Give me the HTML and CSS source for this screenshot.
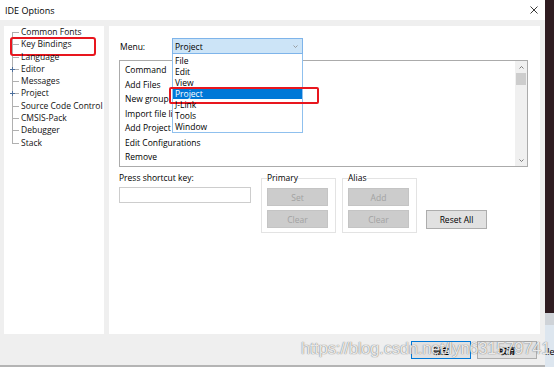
FILE: index.html
```html
<!DOCTYPE html>
<html>
<head>
<meta charset="utf-8">
<title>IDE Options</title>
<link rel="stylesheet" href="styles.css">
</head>
<body>
<div class="screen">
  <div class="dialog">
    <div class="titlebar">
      <span class="title">IDE Options</span>
      <svg class="close" width="8" height="8" viewBox="0 0 8 8"><path d="M0.5 0.5 L7.5 7.5 M7.5 0.5 L0.5 7.5" stroke="#3a3a3a" stroke-width="1" fill="none"/></svg>
    </div>
    <div class="body">
      <div class="tree">
        <div class="node">Common Fonts</div>
        <div class="node marked">Key Bindings</div>
        <div class="node">Language</div>
        <div class="node expandable">Editor</div>
        <div class="node">Messages</div>
        <div class="node expandable">Project</div>
        <div class="node">Source Code Control</div>
        <div class="node">CMSIS-Pack</div>
        <div class="node">Debugger</div>
        <div class="node">Stack</div>
      </div>
      <div class="page">
        <div class="menu-row">
          <span class="menu-label">Menu:</span>
          <div class="combo">
            <div class="combo-box">
              <span>Project</span>
              <svg class="combo-arrow" width="5" height="3" viewBox="0 0 5 3"><path d="M0.5 0.5 L2.5 2.5 L4.5 0.5" stroke="#8a8a8a" stroke-width="0.8" fill="none"/></svg>
            </div>
            <ul class="dropdown">
              <li>File</li>
              <li>Edit</li>
              <li>View</li>
              <li class="selected">Project</li>
              <li>J-Link</li>
              <li>Tools</li>
              <li>Window</li>
            </ul>
          </div>
        </div>
        <div class="listbox">
          <ul class="commands">
            <li>Command</li>
            <li>Add Files</li>
            <li>New group</li>
            <li>Import file list</li>
            <li>Add Project Configuration</li>
            <li>Edit Configurations</li>
            <li>Remove</li>
          </ul>
          <div class="scrollbar">
            <div class="sb-arrow"><svg width="5" height="3" viewBox="0 0 5 3"><path d="M0.5 2.5 L2.5 0.5 L4.5 2.5" stroke="#606060" stroke-width="0.8" fill="none"/></svg></div>
            <div class="sb-thumb"></div>
            <div class="sb-track"></div>
            <div class="sb-arrow"><svg width="5" height="3" viewBox="0 0 5 3"><path d="M0.5 0.5 L2.5 2.5 L4.5 0.5" stroke="#606060" stroke-width="0.8" fill="none"/></svg></div>
          </div>
        </div>
        <div class="keys">
          <div class="shortcut">
            <span class="shortcut-label">Press shortcut key:</span>
            <div class="textbox"></div>
          </div>
          <fieldset class="group">
            <legend>Primary</legend>
            <button class="btn disabled">Set</button>
            <button class="btn disabled">Clear</button>
          </fieldset>
          <fieldset class="group">
            <legend>Alias</legend>
            <button class="btn disabled">Add</button>
            <button class="btn disabled">Clear</button>
          </fieldset>
          <button class="btn reset">Reset All</button>
        </div>
      </div>
    </div>
    <div class="footer">
      <button class="btn foot ok">确定</button>
      <button class="btn foot">取消</button>
    </div>
    <div class="watermark">https://blog.csdn.net/lyn631579741</div>
  </div>
  <div class="side">
    <div class="side-dark"></div>
    <div class="side-band"></div>
    <div class="side-light">ile</div>
  </div>
</div>
</body>
</html>
```

FILE: styles.css
```css
* { box-sizing: border-box; }
html, body { margin: 0; padding: 0; }
body {
  width: 554px;
  height: 367px;
  overflow: hidden;
  font-family: "Open Sans", "Noto Sans CJK SC", sans-serif;
  font-size: 8.5px;
  color: #000;
  background: #fff;
}
ul { list-style: none; margin: 0; padding: 0; }

.screen { display: flex; width: 554px; height: 367px; }

.dialog {
  position: relative;
  width: 545px;
  height: 367px;
  display: flex;
  flex-direction: column;
  background: #efefef;
  border-bottom: 2px solid #b4b4b4;
}

.titlebar {
  height: 20px;
  flex: none;
  background: #fff;
  display: flex;
  align-items: center;
  justify-content: space-between;
  padding: 0 7px 0 5px;
}
.title { font-size: 9px; }
.close { display: block; }

.body {
  display: flex;
  gap: 5px;
  padding: 6px 5px 0 4px;
  height: 314px;
  flex: none;
}

/* tree */
.tree {
  position: relative;
  width: 100px;
  height: 308px;
  background: #fff;
}
.tree::before {
  content: "";
  position: absolute;
  left: 8px;
  top: 6px;
  height: 111px;
  border-left: 1px solid #b0b0b0;
}
.node {
  position: relative;
  height: 12.3px;
  line-height: 12.3px;
  padding-left: 17px;
  white-space: nowrap;
  color: #111;
}
.node::before {
  content: "";
  position: absolute;
  left: 8px;
  top: 6px;
  width: 7px;
  border-top: 1px solid #b0b0b0;
}
.node.expandable::after {
  content: "";
  position: absolute;
  left: 6px;
  top: 4px;
  width: 5px;
  height: 5px;
  background:
    linear-gradient(#4d6f9c, #4d6f9c) center / 5px 1px no-repeat,
    linear-gradient(#4d6f9c, #4d6f9c) center / 1px 5px no-repeat;
}
.node.marked::after {
  content: "";
  position: absolute;
  left: 6px;
  top: -1px;
  width: 82px;
  height: 15px;
  border: 2px solid #e8161e;
  border-radius: 3px;
}

/* right page */
.page {
  position: relative;
  flex: 1;
  height: 308px;
  background: #fff;
}
.menu-row {
  display: flex;
  align-items: center;
  padding: 12px 0 0 11px;
}
.menu-label { width: 52px; }
.combo {
  position: relative;
  width: 131px;
  height: 16px;
  z-index: 2;
}
.combo-box {
  height: 16px;
  border: 1px solid #7eb4ea;
  background: #cce4f7;
  display: flex;
  align-items: center;
  justify-content: space-between;
  padding: 0 4px 0 2px;
}
.combo-arrow { display: block; }
.dropdown {
  position: absolute;
  left: 0;
  top: 16px;
  width: 131px;
  background: #fff;
  border: 1px solid #8fc0ee;
  border-top: none;
  padding-top: 1px;
}
.dropdown li {
  position: relative;
  height: 11px;
  line-height: 11px;
  padding-left: 2px;
}
.dropdown li.selected {
  background: #0078d7;
  color: #fff;
}
.dropdown li.selected::after {
  content: "";
  position: absolute;
  left: -4px;
  top: -1px;
  width: 146px;
  height: 13px;
  border: 2px solid #e8161e;
  border-radius: 2px;
}

.listbox {
  margin: 6px 0 0 10px;
  width: 409px;
  height: 107px;
  border: 1px solid #ababab;
  display: flex;
}
.commands {
  flex: 1;
  padding: 2px 0 0 5px;
  overflow: hidden;
}
.commands li {
  height: 14.5px;
  line-height: 14.5px;
  white-space: nowrap;
}
.scrollbar {
  width: 12px;
  background: #f0f0f0;
  display: flex;
  flex-direction: column;
}
.sb-arrow {
  height: 12px;
  display: flex;
  align-items: center;
  justify-content: center;
}
.sb-arrow svg { display: block; }
.sb-thumb {
  height: 12px;
  margin: 0 1px;
  background: #cdcdcd;
}
.sb-track { flex: 1; }

.keys {
  display: flex;
  align-items: flex-start;
  margin: 5px 0 0 10px;
}
.shortcut { width: 132px; margin-right: 10px; }
.shortcut-label {
  display: block;
  height: 12px;
  line-height: 12px;
}
.textbox {
  margin-top: 3px;
  height: 16px;
  border: 1px solid #cdcdcd;
  background: #fff;
}
.group {
  margin: 0 6px 0 0;
  padding: 0 7px 4px 5px;
  border: 1px solid #e3e3e3;
  width: 75px;
  min-width: 0;
}
.group + .group { margin-right: 9px; }
.group legend {
  padding: 0;
  height: 12px;
  line-height: 12px;
  font-size: 8.5px;
}
.btn {
  font-family: "Open Sans", "Noto Sans CJK SC", sans-serif;
  font-size: 8.5px;
  padding: 0;
  margin: 0;
  border: 1px solid #adadad;
  background: #e1e1e1;
  color: #000;
}
.group .btn {
  display: block;
  width: 61px;
  height: 18px;
  margin-top: 4px;
}
.btn.disabled {
  background: #cccccc;
  border-color: #c4c4c4;
  color: #a2a2a2;
}
.btn.reset {
  margin-top: 38px;
  width: 61px;
  height: 19px;
}

.footer {
  display: flex;
  justify-content: flex-end;
  gap: 6px;
  padding: 7px 8px 0 0;
}
.btn.foot {
  width: 60px;
  height: 18px;
  font-family: "Noto Sans CJK SC", sans-serif;
  font-size: 8px;
  font-weight: bold;
}
.btn.ok { border-color: #0078d7; }

.watermark {
  position: absolute;
  left: 301px;
  top: 338px;
  font-family: "Liberation Sans", sans-serif;
  font-size: 16.5px;
  line-height: 20px;
  letter-spacing: -0.2px;
  white-space: nowrap;
  color: rgba(255, 255, 255, 0.85);
  text-shadow: 0 0 1px rgba(90, 90, 90, 0.8), 0 0 1px rgba(120, 120, 120, 0.6);
  z-index: 5;
}

.side {
  width: 9px;
  display: flex;
  flex-direction: column;
}
.side-dark { height: 313px; background: #2f1c21; }
.side-band { height: 12px; background: #cfd3d8; }
.side-light {
  flex: 1;
  background: #dde6ef;
  font-family: "Open Sans", sans-serif;
  font-size: 9px;
  padding-top: 20px;
  white-space: nowrap;
  overflow: hidden;
}
```
